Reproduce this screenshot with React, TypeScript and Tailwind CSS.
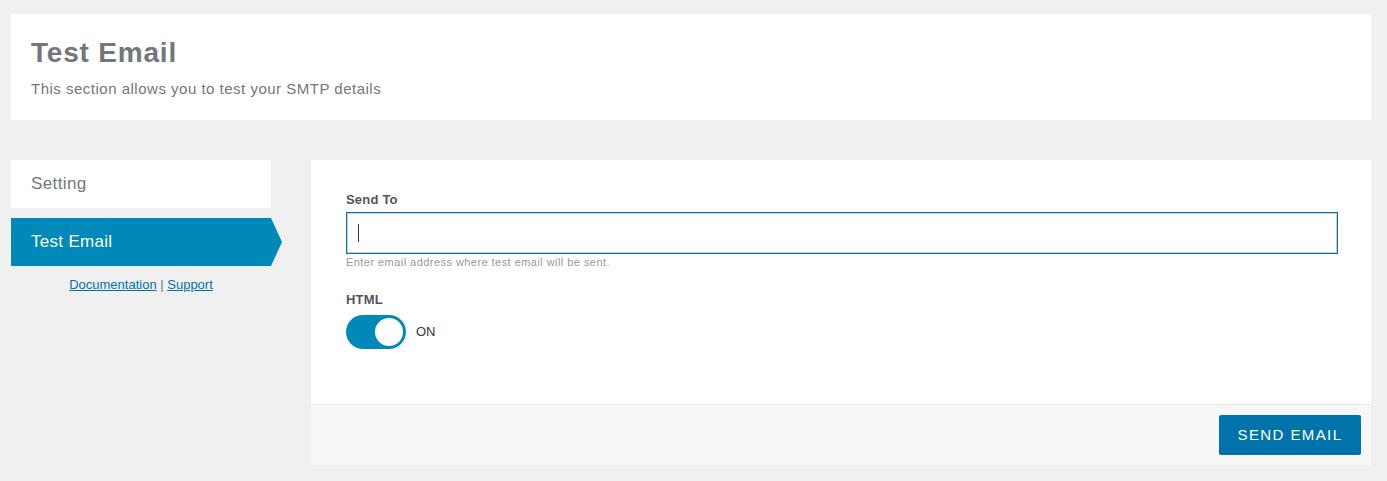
import { useState } from "react";

const font = "font-['Helvetica_Neue','Liberation_Sans',Arial,sans-serif]";

const Toggle = ({ on, onChange }: { on: boolean; onChange: () => void }) => (
  <button
    type="button"
    onClick={onChange}
    className={`flex h-[34px] w-[60px] items-center rounded-full p-[3px] ${
      on ? "justify-end bg-[#0088b8]" : "justify-start bg-[#ccc]"
    }`}
  >
    <span className="h-[28px] w-[28px] rounded-full bg-white" />
  </button>
);

export default function App() {
  const [html, setHtml] = useState(true);
  const [email, setEmail] = useState("");

  return (
    <div className={`min-h-[481px] bg-[#f0f0f0] px-[11px] pt-[14px] ${font}`}>
      {/* header */}
      <div className="mr-[5px] h-[106px] bg-white px-[20px] pt-[22px]">
        <h1 className="text-[28px] font-bold leading-[34px] tracking-[0.8px] text-[#72777c]">Test Email</h1>
        <p className="mt-[9px] text-[15px] leading-[20px] tracking-[0.5px] text-[#72777c]">
          This section allows you to test your SMTP details
        </p>
      </div>

      <div className="mt-[40px] flex gap-[40px]">
        {/* sidebar */}
        <div className="w-[260px] shrink-0">
          <div className="flex h-[48px] items-center bg-white px-[20px] text-[17px] tracking-[0.4px] text-[#72777c]">
            Setting
          </div>
          <div className="mt-[10px] flex">
            <div className="flex h-[48px] w-[260px] shrink-0 items-center bg-[#0088b8] px-[20px] text-[17px] tracking-[0.3px] text-white">
              Test Email
            </div>
            <div className="h-0 w-0 shrink-0 border-y-[24px] border-l-[11px] border-y-transparent border-l-[#0088b8]" />
          </div>
          <div className="mt-[10px] text-center text-[13px] leading-[17px] text-[#72777c]">
            <a href="#" className="text-[#0073aa] underline">Documentation</a>
            {" | "}
            <a href="#" className="text-[#0073aa] underline">Support</a>
          </div>
        </div>

        {/* main panel */}
        <div className="mr-[5px] flex h-[305px] flex-1 flex-col bg-white">
          <div className="flex-1 pl-[35px] pr-[33px] pt-[32px]">
            <label className="block text-[13px] font-semibold leading-[16px] tracking-[0.2px] text-[#555]">Send To</label>
            <div className="relative mt-[4px]">
              <input
                value={email}
                onChange={(e) => setEmail(e.target.value)}
                className="block h-[42px] w-full border border-[#0073aa] px-[11px] text-[14px] text-[#32373c] shadow-[inset_0_0_0_1px_#ccc] caret-[#32373c] outline-none"
              />
              {/* caret, shown while empty */}
              {email === "" && (
                <span className="pointer-events-none absolute left-[12px] top-[12px] h-[18px] w-[1px] bg-[#32373c]" />
              )}
            </div>
            <p className="mt-[1px] text-[11px] leading-[14px] tracking-[0.45px] text-[#999]">
              Enter email address where test email will be sent.
            </p>
            <label className="mt-[23px] block text-[13px] font-semibold leading-[16px] tracking-[0.2px] text-[#555]">HTML</label>
            <div className="mt-[7px] flex items-center gap-[10px]">
              <Toggle on={html} onChange={() => setHtml(!html)} />
              <span className="text-[13px] text-[#32373c]">{html ? "ON" : "OFF"}</span>
            </div>
          </div>
          <div className="flex h-[61px] items-center justify-end border-t border-[#e8e8e8] bg-[#f7f7f7] px-[10px]">
            <button className="h-[40px] w-[142px] rounded-[2px] bg-[#0073aa] text-[15px] tracking-[1.4px] text-white">
              SEND EMAIL
            </button>
          </div>
        </div>
      </div>
    </div>
  );
}
